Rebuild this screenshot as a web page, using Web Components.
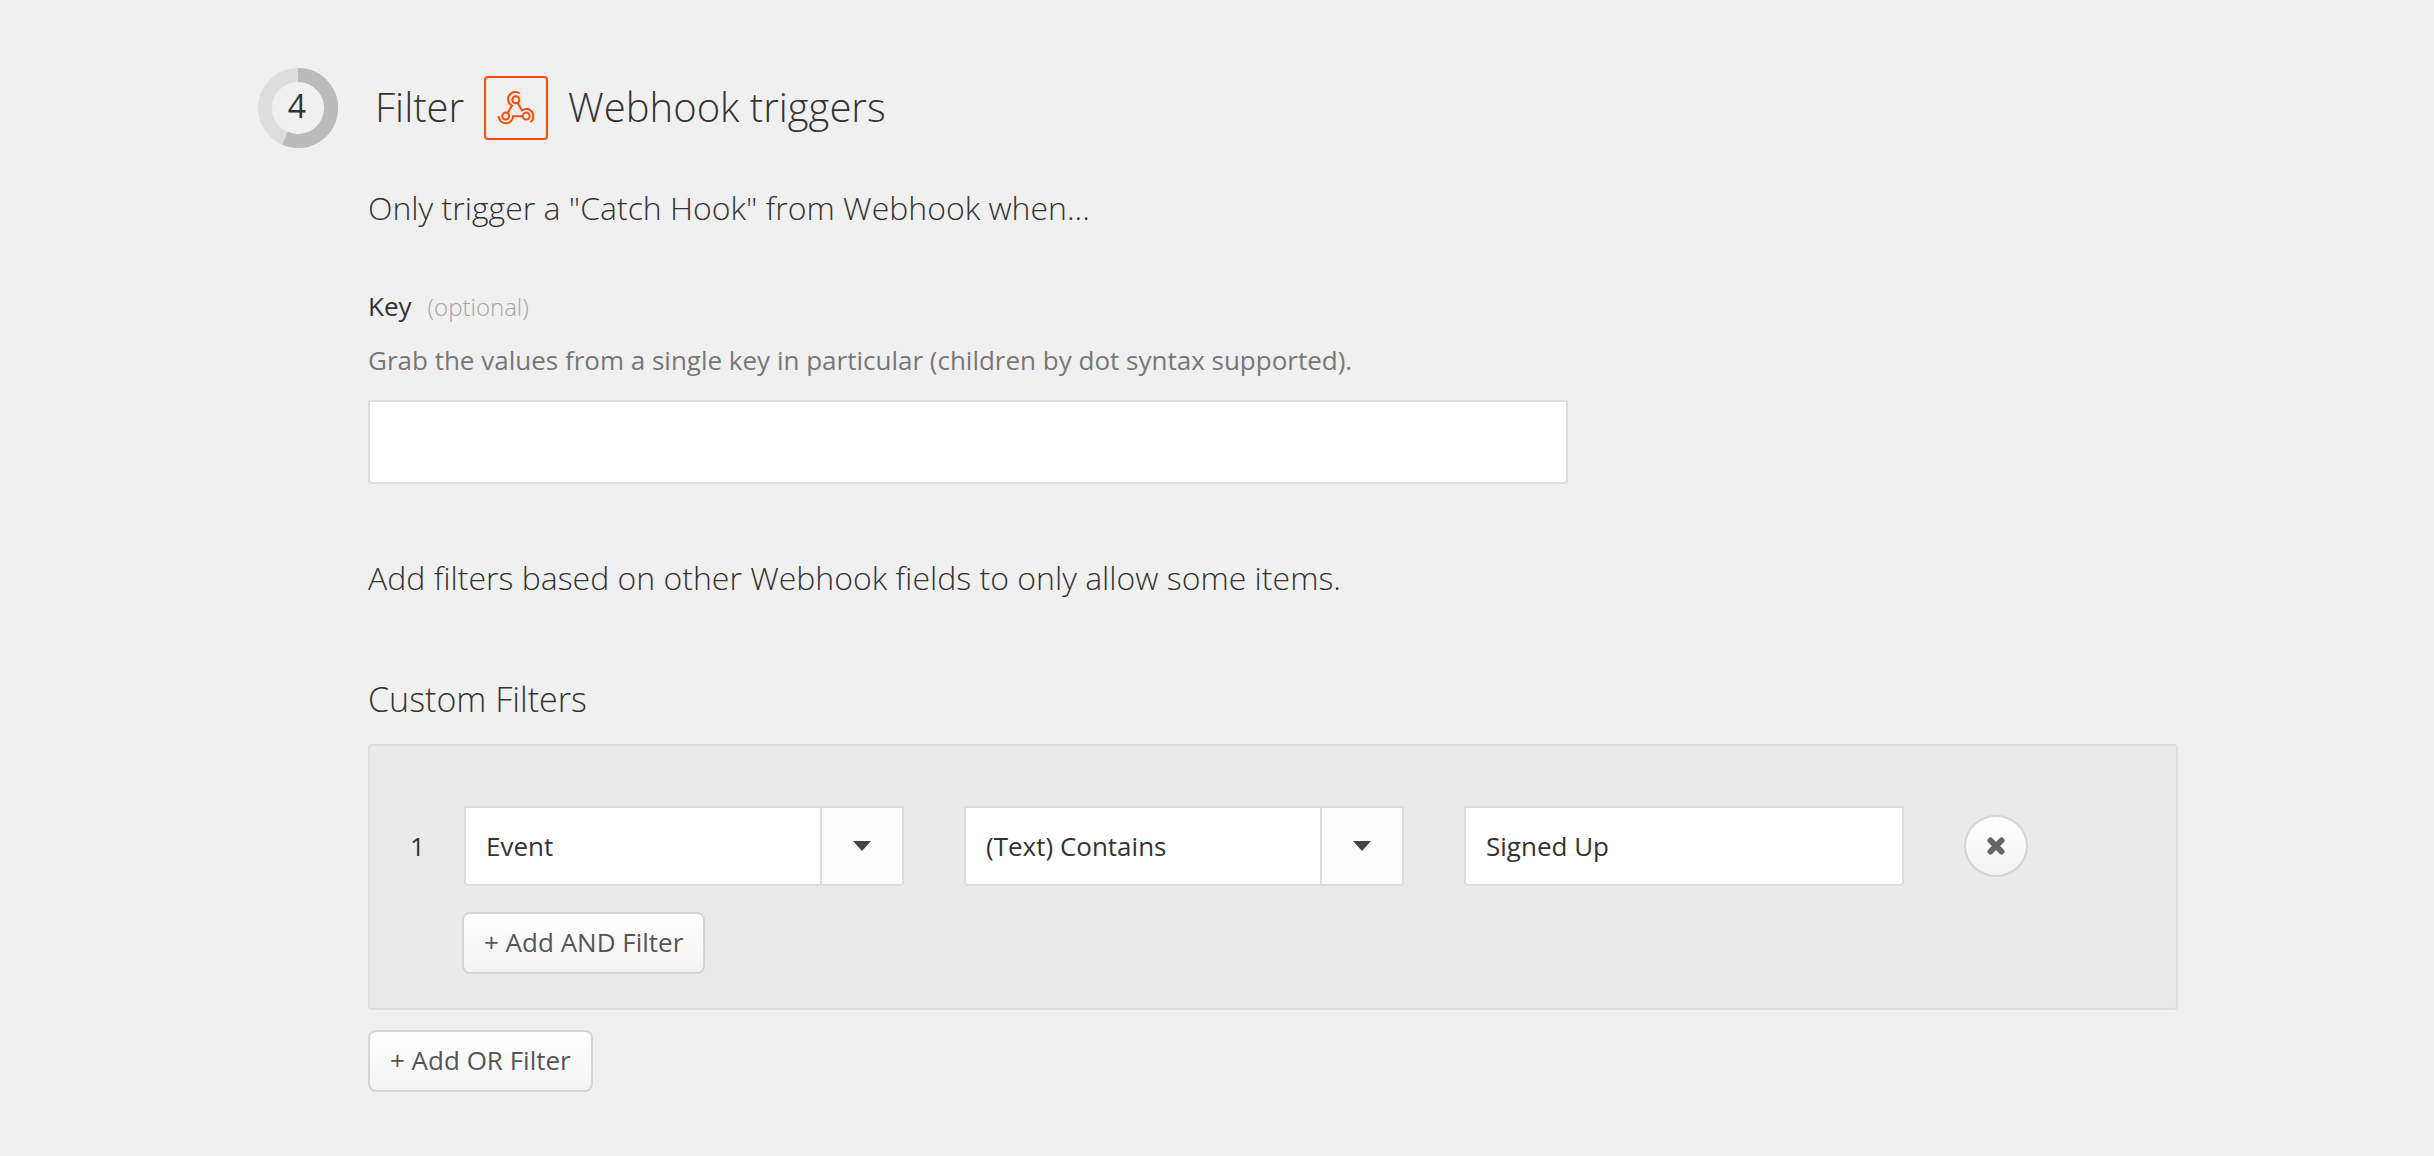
<!DOCTYPE html>
<html lang="en">
<head>
<meta charset="utf-8">
<title>Filter Webhook triggers</title>
<style>
  body {
    margin: 0;
    background: #f0f0f0;
    color: #333;
    font-family: "Open Sans", "Noto Sans", sans-serif;
    font-size: 26px;
    line-height: 36px;
  }
</style>
</head>
<body>
<filter-step></filter-step>

<script>
const define = (name, html, setup) => {
  const template = document.createElement('template');
  template.innerHTML = html;
  customElements.define(name, class extends HTMLElement {
    constructor() {
      super();
      this.attachShadow({ mode: 'open' }).append(template.content.cloneNode(true));
    }
    connectedCallback() {
      if (setup) setup(this, this.shadowRoot);
    }
  });
};

define('step-ring', `
  <style>
    :host { display: grid; flex: none; width: 80px; height: 80px; }
    svg, span { grid-area: 1 / 1; }
    span { place-self: center; padding: 0 2px 4px 0; font-size: 32px; }
  </style>
  <svg width="80" height="80" viewBox="0 0 80 80" fill="none" stroke-width="14" aria-hidden="true">
    <circle cx="40" cy="40" r="33" stroke="#ddd"/>
    <path d="M40 7A33 33 0 1 1 27 70.3" stroke="#bbb"/>
  </svg>
  <span><slot></slot></span>
`);

define('webhook-logo', `
  <style>
    :host { display: block; flex: none; box-sizing: border-box; width: 64px; height: 64px; border: 2px solid #ff4a00; border-radius: 4px; }
    svg { display: block; }
  </style>
  <svg width="60" height="60" viewBox="2 2 60 60" fill="none" stroke="#ff4a00" stroke-width="2" role="img" aria-label="Webhook">
    <circle cx="31.8" cy="23.8" r="3.5"/>
    <circle cx="21.7" cy="40.1" r="3.5"/>
    <circle cx="42.2" cy="40.1" r="3.5"/>
    <path d="M35.8 17.6A7.2 7.2 0 1 0 28 29.6L23.6 37"/>
    <path d="M33.6 26.8L37.9 34.4A7.1 7.1 0 0 1 46.4 46"/>
    <path d="M38.7 40.2H29A7.2 7.2 0 0 1 14.6 40"/>
  </svg>
`);

define('push-button', `
  <style>
    :host { display: block; width: max-content; }
    button {
      display: block; box-sizing: border-box; height: 62px; padding: 0 20px 2px; border: 2px solid #d5d5d5; border-radius: 8px;
      background: linear-gradient(#fff, #f3f3f3); color: #555; font: inherit; line-height: 36px; cursor: pointer;
    }
    :host([round]) button { display: grid; place-items: center; width: 64px; padding: 0; border-radius: 50%; }
  </style>
  <button type="button"><slot></slot></button>
`, (el, root) => {
  if (el.hasAttribute('label')) root.querySelector('button').setAttribute('aria-label', el.getAttribute('label'));
});

const fieldBox = `
  box-sizing: border-box; width: 100%; margin: 0; border: 2px solid #ddd; border-radius: 0 0 4px 4px;
  background: #fff; color: #333; font: inherit; outline: 0;
`;

define('text-field', `
  <style>
    :host { display: block; min-width: 0; }
    input { ${fieldBox} display: block; height: 80px; padding: 0 20px; }
  </style>
  <input type="text">
`, (el, root) => {
  const input = root.querySelector('input');
  input.value = el.getAttribute('value');
  input.setAttribute('aria-label', el.getAttribute('label'));
});

define('select-field', `
  <style>
    :host { display: grid; grid-template-columns: 1fr 84px; min-width: 0; }
    select { ${fieldBox} grid-area: 1 / 1 / 2 / 3; height: 80px; padding: 0 100px 0 20px; appearance: none; }
    .caret {
      grid-area: 1 / 2; z-index: 1; display: grid; place-items: center; margin: 2px 2px 2px 0;
      border-left: 2px solid #ddd; border-radius: 0 0 2px 0; background: #fcfcfc; pointer-events: none;
    }
    svg { display: block; }
  </style>
  <select><option></option></select>
  <span class="caret"><svg width="18" height="10" viewBox="0 0 18 10" aria-hidden="true"><path d="M0 0H18L9 10Z" fill="#444"/></svg></span>
`, (el, root) => {
  root.querySelector('option').textContent = el.getAttribute('value');
  root.querySelector('select').setAttribute('aria-label', el.getAttribute('label'));
});

define('key-field', `
  <style>
    :host { display: block; max-width: 1200px; }
    .head { display: flex; align-items: baseline; gap: 16px; }
    .optional { color: #a5a5a5; font-size: 24px; font-weight: 300; }
    p { margin: 17px 0 22px; color: #777; }
    input { ${fieldBox} display: block; height: 84px; padding: 0 20px; }
  </style>
  <div class="head"><label for="key">Key</label><span class="optional">(optional)</span></div>
  <p id="hint">Grab the values from a single key in particular (children by dot syntax supported).</p>
  <input id="key" type="text" aria-describedby="hint">
`);

define('filter-group', `
  <style>
    :host { display: block; padding: 60px 148px 34px 24px; border: 2px solid #ddd; border-radius: 4px; background: #eaeaea; }
    .row { display: flex; align-items: center; }
    .number { flex: none; width: 70px; box-sizing: border-box; padding-left: 16px; }
    .fields { display: flex; flex: 1; align-items: center; gap: 60px; min-width: 0; }
    .fields > :not(push-button) { flex: 1; }
    .add { margin: 26px 0 0 68px; }
    svg { display: block; }
  </style>
  <div class="row">
    <span class="number">1</span>
    <div class="fields">
      <select-field label="Field" value="Event"></select-field>
      <select-field label="Condition" value="(Text) Contains"></select-field>
      <text-field label="Value" value="Signed Up"></text-field>
      <push-button round label="Remove filter"><svg width="20" height="20" viewBox="0 0 20 20" fill="none" stroke="#666" stroke-width="6" stroke-linecap="round" aria-hidden="true"><path d="M4.5 4.5L15.5 15.5M15.5 4.5L4.5 15.5"/></svg></push-button>
    </div>
  </div>
  <push-button class="add">+ Add AND Filter</push-button>
`);

define('filter-step', `
  <style>
    :host { display: block; padding: 68px 256px 64px 258px; }
    header { display: flex; align-items: center; gap: 37px; }
    h1 { display: flex; align-items: center; gap: 20px; margin: 0; font-size: 40px; font-weight: 300; line-height: 54px; }
    h1 span { padding-bottom: 2px; }
    .body { padding-left: 110px; }
    p, h2 { margin: 0; font-weight: 300; }
    p { font-size: 32px; line-height: 44px; }
    .intro { margin: 38px 0 58px; }
    .more { margin: 72px 0 75px; }
    h2 { margin-bottom: 21px; font-size: 34px; line-height: 48px; }
    .or { margin-top: 20px; }
  </style>
  <header>
    <step-ring>4</step-ring>
    <h1><span>Filter</span><webhook-logo></webhook-logo><span>Webhook triggers</span></h1>
  </header>
  <div class="body">
    <p class="intro">Only trigger a "Catch Hook" from Webhook when...</p>
    <key-field></key-field>
    <p class="more">Add filters based on other Webhook fields to only allow some items.</p>
    <h2>Custom Filters</h2>
    <filter-group></filter-group>
    <push-button class="or">+ Add OR Filter</push-button>
  </div>
`);
</script>
</body>
</html>
